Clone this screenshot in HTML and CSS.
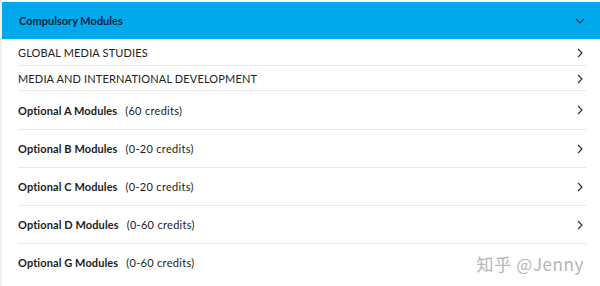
FILE: index.html
```html
<!DOCTYPE html>
<html>
<head>
<meta charset="utf-8">
<link rel="stylesheet" href="styles.css">
</head>
<body>
<div class="panel">
  <div class="header">
    <span class="header-title">Compulsory Modules</span>
    <svg class="chev-down" width="10" height="6" viewBox="0 0 10 6"><path d="M1 1 L5 5 L9 1" fill="none" stroke="#2a3a55" stroke-width="1.2"/></svg>
  </div>
  <ul class="list">
    <li class="row row-course"><span class="course">GLOBAL MEDIA STUDIES</span><svg class="chev" width="6" height="10" viewBox="0 0 6 10"><path d="M1 1 L5 5 L1 9" fill="none" stroke="#333" stroke-width="1.2"/></svg></li>
    <li class="row row-course row-course-2"><span class="course">MEDIA AND INTERNATIONAL DEVELOPMENT</span><svg class="chev" width="6" height="10" viewBox="0 0 6 10"><path d="M1 1 L5 5 L1 9" fill="none" stroke="#333" stroke-width="1.2"/></svg></li>
    <li class="row row-group row-group-first"><span class="group"><b>Optional A Modules</b><span class="credits">(60 credits)</span></span><svg class="chev" width="6" height="10" viewBox="0 0 6 10"><path d="M1 1 L5 5 L1 9" fill="none" stroke="#333" stroke-width="1.2"/></svg></li>
    <li class="row row-group"><span class="group"><b>Optional B Modules</b><span class="credits">(0-20 credits)</span></span><svg class="chev" width="6" height="10" viewBox="0 0 6 10"><path d="M1 1 L5 5 L1 9" fill="none" stroke="#333" stroke-width="1.2"/></svg></li>
    <li class="row row-group"><span class="group"><b>Optional C Modules</b><span class="credits">(0-20 credits)</span></span><svg class="chev" width="6" height="10" viewBox="0 0 6 10"><path d="M1 1 L5 5 L1 9" fill="none" stroke="#333" stroke-width="1.2"/></svg></li>
    <li class="row row-group"><span class="group"><b>Optional D Modules</b><span class="credits">(0-60 credits)</span></span><svg class="chev" width="6" height="10" viewBox="0 0 6 10"><path d="M1 1 L5 5 L1 9" fill="none" stroke="#333" stroke-width="1.2"/></svg></li>
    <li class="row row-group row-last"><span class="group"><b>Optional G Modules</b><span class="credits">(0-60 credits)</span></span></li>
  </ul>
  <div class="watermark">知乎 @Jenny</div>
</div>
</body>
</html>
```

FILE: styles.css
```css
html, body {
  margin: 0;
  padding: 0;
  background: #fff;
}
body {
  font-family: "Lato", "Noto Sans", sans-serif;
  color: #1c1c1c;
}
.panel {
  position: relative;
  width: 600px;
  height: 286px;
  padding-top: 2px;
  box-sizing: border-box;
  border-left: 2px solid #f1f1f1;
}
.header {
  height: 37px;
  background: #00a9eb;
  display: flex;
  align-items: center;
  justify-content: space-between;
  padding: 0 15px 0 17px;
}
.header-title {
  font-weight: 700;
  font-size: 11px;
  color: #0f1d3a;
}
.chev-down {
  display: block;
}
.list {
  list-style: none;
  margin: 0;
  padding: 0 14px 0 16px;
}
.row {
  display: flex;
  align-items: center;
  justify-content: space-between;
  border-bottom: 1px solid #e8e8e8;
  padding-right: 3px;
}
.row-course {
  height: 25px;
  padding-top: 1px;
}
.row-course-2 {
  height: 23px;
}
.row-group {
  height: 37px;
}
.row-group-first {
  height: 38px;
}
.row-last {
  border-bottom: none;
}
.course {
  font-size: 11px;
  letter-spacing: 0.15px;
  color: #222;
}
.group {
  font-size: 11px;
  color: #1c1c1c;
}
.group b {
  font-weight: 700;
  letter-spacing: 0.1px;
}
.credits {
  margin-left: 8px;
  letter-spacing: 0.3px;
}
.chev {
  display: block;
}
.watermark {
  position: absolute;
  right: 16px;
  top: 251px;
  font-family: "Noto Sans CJK SC", "Noto Sans", sans-serif;
  font-size: 17px;
  color: #b5b5b5;
  letter-spacing: 0.6px;
  text-shadow: 0 0 2px #fff;
}
```
